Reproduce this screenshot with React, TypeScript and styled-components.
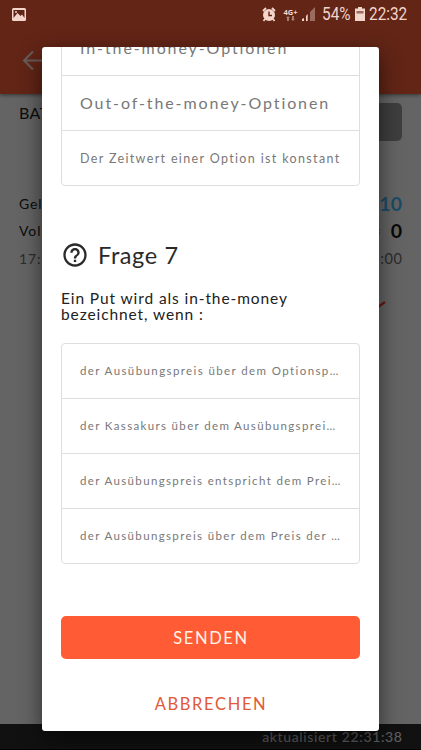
import React from "react";
import styled, { createGlobalStyle } from "styled-components";

const GlobalStyle = createGlobalStyle`
  * { box-sizing: border-box; }
  body { margin: 0; background: #fff; font-family: Lato, "Open Sans", sans-serif; }
`;

const Screen = styled.div`
  position: relative;
  width: 421px;
  height: 750px;
  overflow: hidden;
`;

const Page = styled.div`
  display: flex;
  flex-direction: column;
  height: 100%;
  background: #fbfbfb;
  isolation: isolate;
`;

const AppBar = styled.header`
  display: flex;
  align-items: flex-end;
  height: 94px;
  padding: 0 0 22px 22px;
  background: rgb(244, 92, 57);
  box-shadow: 0 1px 4px rgba(0, 0, 0, 0.5);
  z-index: 1;
`;

const Quote = styled.main`
  flex: 1;
  display: flex;
  flex-direction: column;
  padding: 9px 19px 0;
`;

const Line = styled.div<{ $height: number }>`
  display: flex;
  align-items: center;
  justify-content: space-between;
  height: ${(p) => p.$height}px;
`;

const Label = styled.span<{ $size?: number; $color?: string; $weight?: number; $spacing?: number }>`
  font-size: ${(p) => p.$size ?? 14}px;
  font-weight: ${(p) => p.$weight ?? 400};
  color: ${(p) => p.$color ?? "#222"};
  letter-spacing: ${(p) => p.$spacing ?? 0.9}px;
  margin-right: ${(p) => -(p.$spacing ?? 0.9)}px;
  white-space: pre;
`;

const TradeButton = styled.div`
  width: 60px;
  height: 38px;
  border-radius: 5px;
  background: #9c9c9c;
`;

const TitleLine = styled.div`
  display: flex;
  align-items: flex-start;
  justify-content: space-between;
  height: 87px;
`;

const Chart = styled.svg`
  align-self: flex-end;
  margin: 22px 14px 0 0;
`;

const Footer = styled.footer`
  display: flex;
  align-items: center;
  justify-content: flex-end;
  height: 26px;
  padding-right: 19px;
  background: #2c2c2c;
  border-bottom: 1px solid #000;
`;

const Scrim = styled.div`
  position: absolute;
  inset: 0;
  background: rgba(0, 0, 0, 0.6);
`;

const StatusBar = styled.div`
  position: absolute;
  inset: 0 0 auto 0;
  display: flex;
  align-items: center;
  height: 28px;
  padding: 0 12px;
  color: #f3d5cc;
`;

const Spacer = styled.div`
  flex: 1;
`;

const Gap = styled.div<{ $width: number }>`
  flex: none;
  width: ${(p) => p.$width}px;
`;

const StatusText = styled.span<{ $width: number }>`
  flex: none;
  width: ${(p) => p.$width}px;
  font: 400 18.5px/28px Roboto, sans-serif;
  white-space: nowrap;
  transform: scaleX(0.83);
  transform-origin: 0 50%;
`;

const Network = styled.div`
  display: flex;
  flex-direction: column;
  align-items: center;
  width: 15px;
  margin: 0 4px 0 7px;
  font: 700 7.5px/8px "Open Sans", sans-serif;
`;

const Dialog = styled.section`
  position: absolute;
  top: 47px;
  left: 42px;
  width: 337px;
  height: 684px;
  border-radius: 3px;
  background: #fff;
  box-shadow: 0 8px 22px rgba(0, 0, 0, 0.55);
`;

const DialogContent = styled.div`
  display: flex;
  flex-direction: column;
  height: 100%;
  padding: 0 19px;
  overflow: hidden;
  border-radius: 3px;
`;

const OptionList = styled.ul<{ $scrolled?: boolean }>`
  flex: none;
  margin: ${(p) => (p.$scrolled ? "-27px" : "0")} 0 0;
  padding: 0;
  list-style: none;
  border: 1px solid #dedede;
  border-radius: 4px;
`;

const Option = styled.li<{ $size: number; $spacing: number; $lower?: boolean }>`
  height: 55px;
  padding: ${(p) => (p.$lower ? 1 : 0)}px 0 0 18px;
  border-bottom: 1px solid #dedede;
  color: #787878;
  font-size: ${(p) => p.$size}px;
  line-height: 54px;
  letter-spacing: ${(p) => p.$spacing}px;
  white-space: nowrap;
  &:last-child {
    height: 54px;
    border-bottom: 0;
  }
`;

const QuestionTitle = styled.h2`
  display: flex;
  align-items: center;
  gap: 9px;
  height: 32px;
  margin: 53px 0 0;
  color: #2a2a2a;
  font-size: 23.5px;
  font-weight: 400;
  letter-spacing: 0.6px;
`;

const QuestionText = styled.p`
  margin: 19px 0 21px;
  color: #222;
  font-size: 15.5px;
  line-height: 16px;
  letter-spacing: 0.9px;
  white-space: pre-line;
`;

const Actions = styled.div`
  display: flex;
  flex-direction: column;
  margin-top: 52px;
`;

const Button = styled.button<{ $primary?: boolean }>`
  height: ${(p) => (p.$primary ? 43 : 40)}px;
  margin: 0 0 ${(p) => (p.$primary ? 25 : 0)}px;
  padding: 0 0 0 1px;
  border: 0;
  border-radius: 5px;
  background: ${(p) => (p.$primary ? "#ff5c35" : "transparent")};
  color: ${(p) => (p.$primary ? "#fff3e6" : "#e2583a")};
  font: 400 16.5px Lato, sans-serif;
  letter-spacing: ${(p) => (p.$primary ? 1.6 : 1.65)}px;
`;

const answers = [
  { text: "der Ausübungspreis über dem Optionsp…", spacing: 1.4 },
  { text: "der Kassakurs über dem Ausübungsprei…", spacing: 1.35 },
  { text: "der Ausübungspreis entspricht dem Prei…", spacing: 1.36 },
  { text: "der Ausübungspreis über dem Preis der …", spacing: 1.36 },
];

export default function App() {
  return (
    <Screen>
      <GlobalStyle />
      <Page>
        <AppBar>
          <svg width="22" height="22" viewBox="0 0 22 22" fill="none" stroke="#fff" strokeOpacity="0.85" strokeWidth="2">
            <path d="M22 10.5H2M11 1.5 2 10.5l9 9" />
          </svg>
        </AppBar>
        <Quote>
          <TitleLine>
            <Label $size={16} $spacing={0.4}>BATER</Label>
            <TradeButton />
          </TitleLine>
          <Line $height={27}>
            <Label>Geld</Label>
            <Label $size={19.5} $weight={700} $color="#48bcff" $spacing={0.2}>10,10</Label>
          </Line>
          <Line $height={27}>
            <Label>Vol.</Label>
            <Label $size={19.5} $weight={700} $color="#161616" $spacing={0.2}>=  0</Label>
          </Line>
          <Line $height={29}>
            <Label $color="#6e6e6e">17:35</Label>
            <Label $color="#6e6e6e" $size={14.5} $spacing={0.7}>17:00:00</Label>
          </Line>
          <Chart width="20" height="20" viewBox="0 0 20 20" fill="none" stroke="#ff4034" strokeWidth="2.2">
            <path d="M3 17 L17 7" />
          </Chart>
        </Quote>
        <Footer>
          <Label $color="#f0f0f0" $spacing={0.65}>aktualisiert 22:31:38</Label>
        </Footer>
      </Page>
      <Scrim />
      <StatusBar>
        <svg width="14" height="13" viewBox="0 0 14 13">
          <rect width="14" height="13" rx="1.5" fill="currentColor" />
          <path d="M1.5 10V2h11v8L10 6.5 8.5 8 5.5 5Z" fill="#602416" />
          <circle cx="4" cy="4" r="1" fill="currentColor" />
        </svg>
        <Spacer />
        <svg width="14" height="15" viewBox="0 0 14 15" fill="none">
          <path d="M1 4 4 1M10 1l3 3M3 12l-1.5 2M11 12l1.5 2" stroke="currentColor" strokeWidth="1.8" />
          <circle cx="7" cy="8" r="6" fill="currentColor" />
          <path d="M7 4.5V8.5h3" stroke="#602416" strokeWidth="1.4" />
        </svg>
        <Network>
          4G+
          <svg width="9" height="5" viewBox="0 0 9 5" fill="currentColor" opacity="0.5">
            <path d="M0 2 2 0l2 2H3v3H1V2ZM5 3h1V0h2v3h1L7 5Z" />
          </svg>
        </Network>
        <svg width="14" height="14" viewBox="0 0 14 14" fill="currentColor">
          <path d="M0 14v-2l2-1v3ZM4 14V9l1.7-2v7Z" />
          <path d="M8 14V5l5-5v14Z" opacity="0.4" />
        </svg>
        <Gap $width={6} />
        <StatusText $width={28}>54%</StatusText>
        <Gap $width={5} />
        <svg width="10" height="14" viewBox="0 0 10 14" fill="currentColor">
          <path d="M3 0h4v1.5h3V14H0V1.5h3Z" />
          <path d="M1.5 4h7v2.5h-7Z" fill="#602416" opacity="0.6" />
        </svg>
        <Gap $width={4} />
        <StatusText $width={40}>22:32</StatusText>
      </StatusBar>
      <Dialog>
        <DialogContent>
          <OptionList $scrolled>
            <Option $size={16} $spacing={1.9}>In-the-money-Optionen</Option>
            <Option $size={16} $spacing={1.9}>Out-of-the-money-Optionen</Option>
            <Option $size={12.5} $spacing={1.35} $lower>Der Zeitwert einer Option ist konstant</Option>
          </OptionList>
          <QuestionTitle>
            <svg width="28" height="28" viewBox="0 0 24 24" fill="currentColor">
              <path d="M11 18h2v-2h-2v2Zm1-16C6.48 2 2 6.48 2 12s4.48 10 10 10 10-4.48 10-10S17.52 2 12 2Zm0 18c-4.41 0-8-3.59-8-8s3.59-8 8-8 8 3.59 8 8-3.59 8-8 8Zm0-14c-2.21 0-4 1.79-4 4h2c0-1.1.9-2 2-2s2 .9 2 2c0 2-3 1.75-3 5h2c0-2.25 3-2.5 3-5 0-2.21-1.79-4-4-4Z" />
            </svg>
            Frage 7
          </QuestionTitle>
          <QuestionText>{"Ein Put wird als in-the-money\nbezeichnet, wenn :"}</QuestionText>
          <OptionList>
            {answers.map((a) => (
              <Option key={a.text} $size={11.5} $spacing={a.spacing}>{a.text}</Option>
            ))}
          </OptionList>
          <Actions>
            <Button $primary>SENDEN</Button>
            <Button>ABBRECHEN</Button>
          </Actions>
        </DialogContent>
      </Dialog>
    </Screen>
  );
}
